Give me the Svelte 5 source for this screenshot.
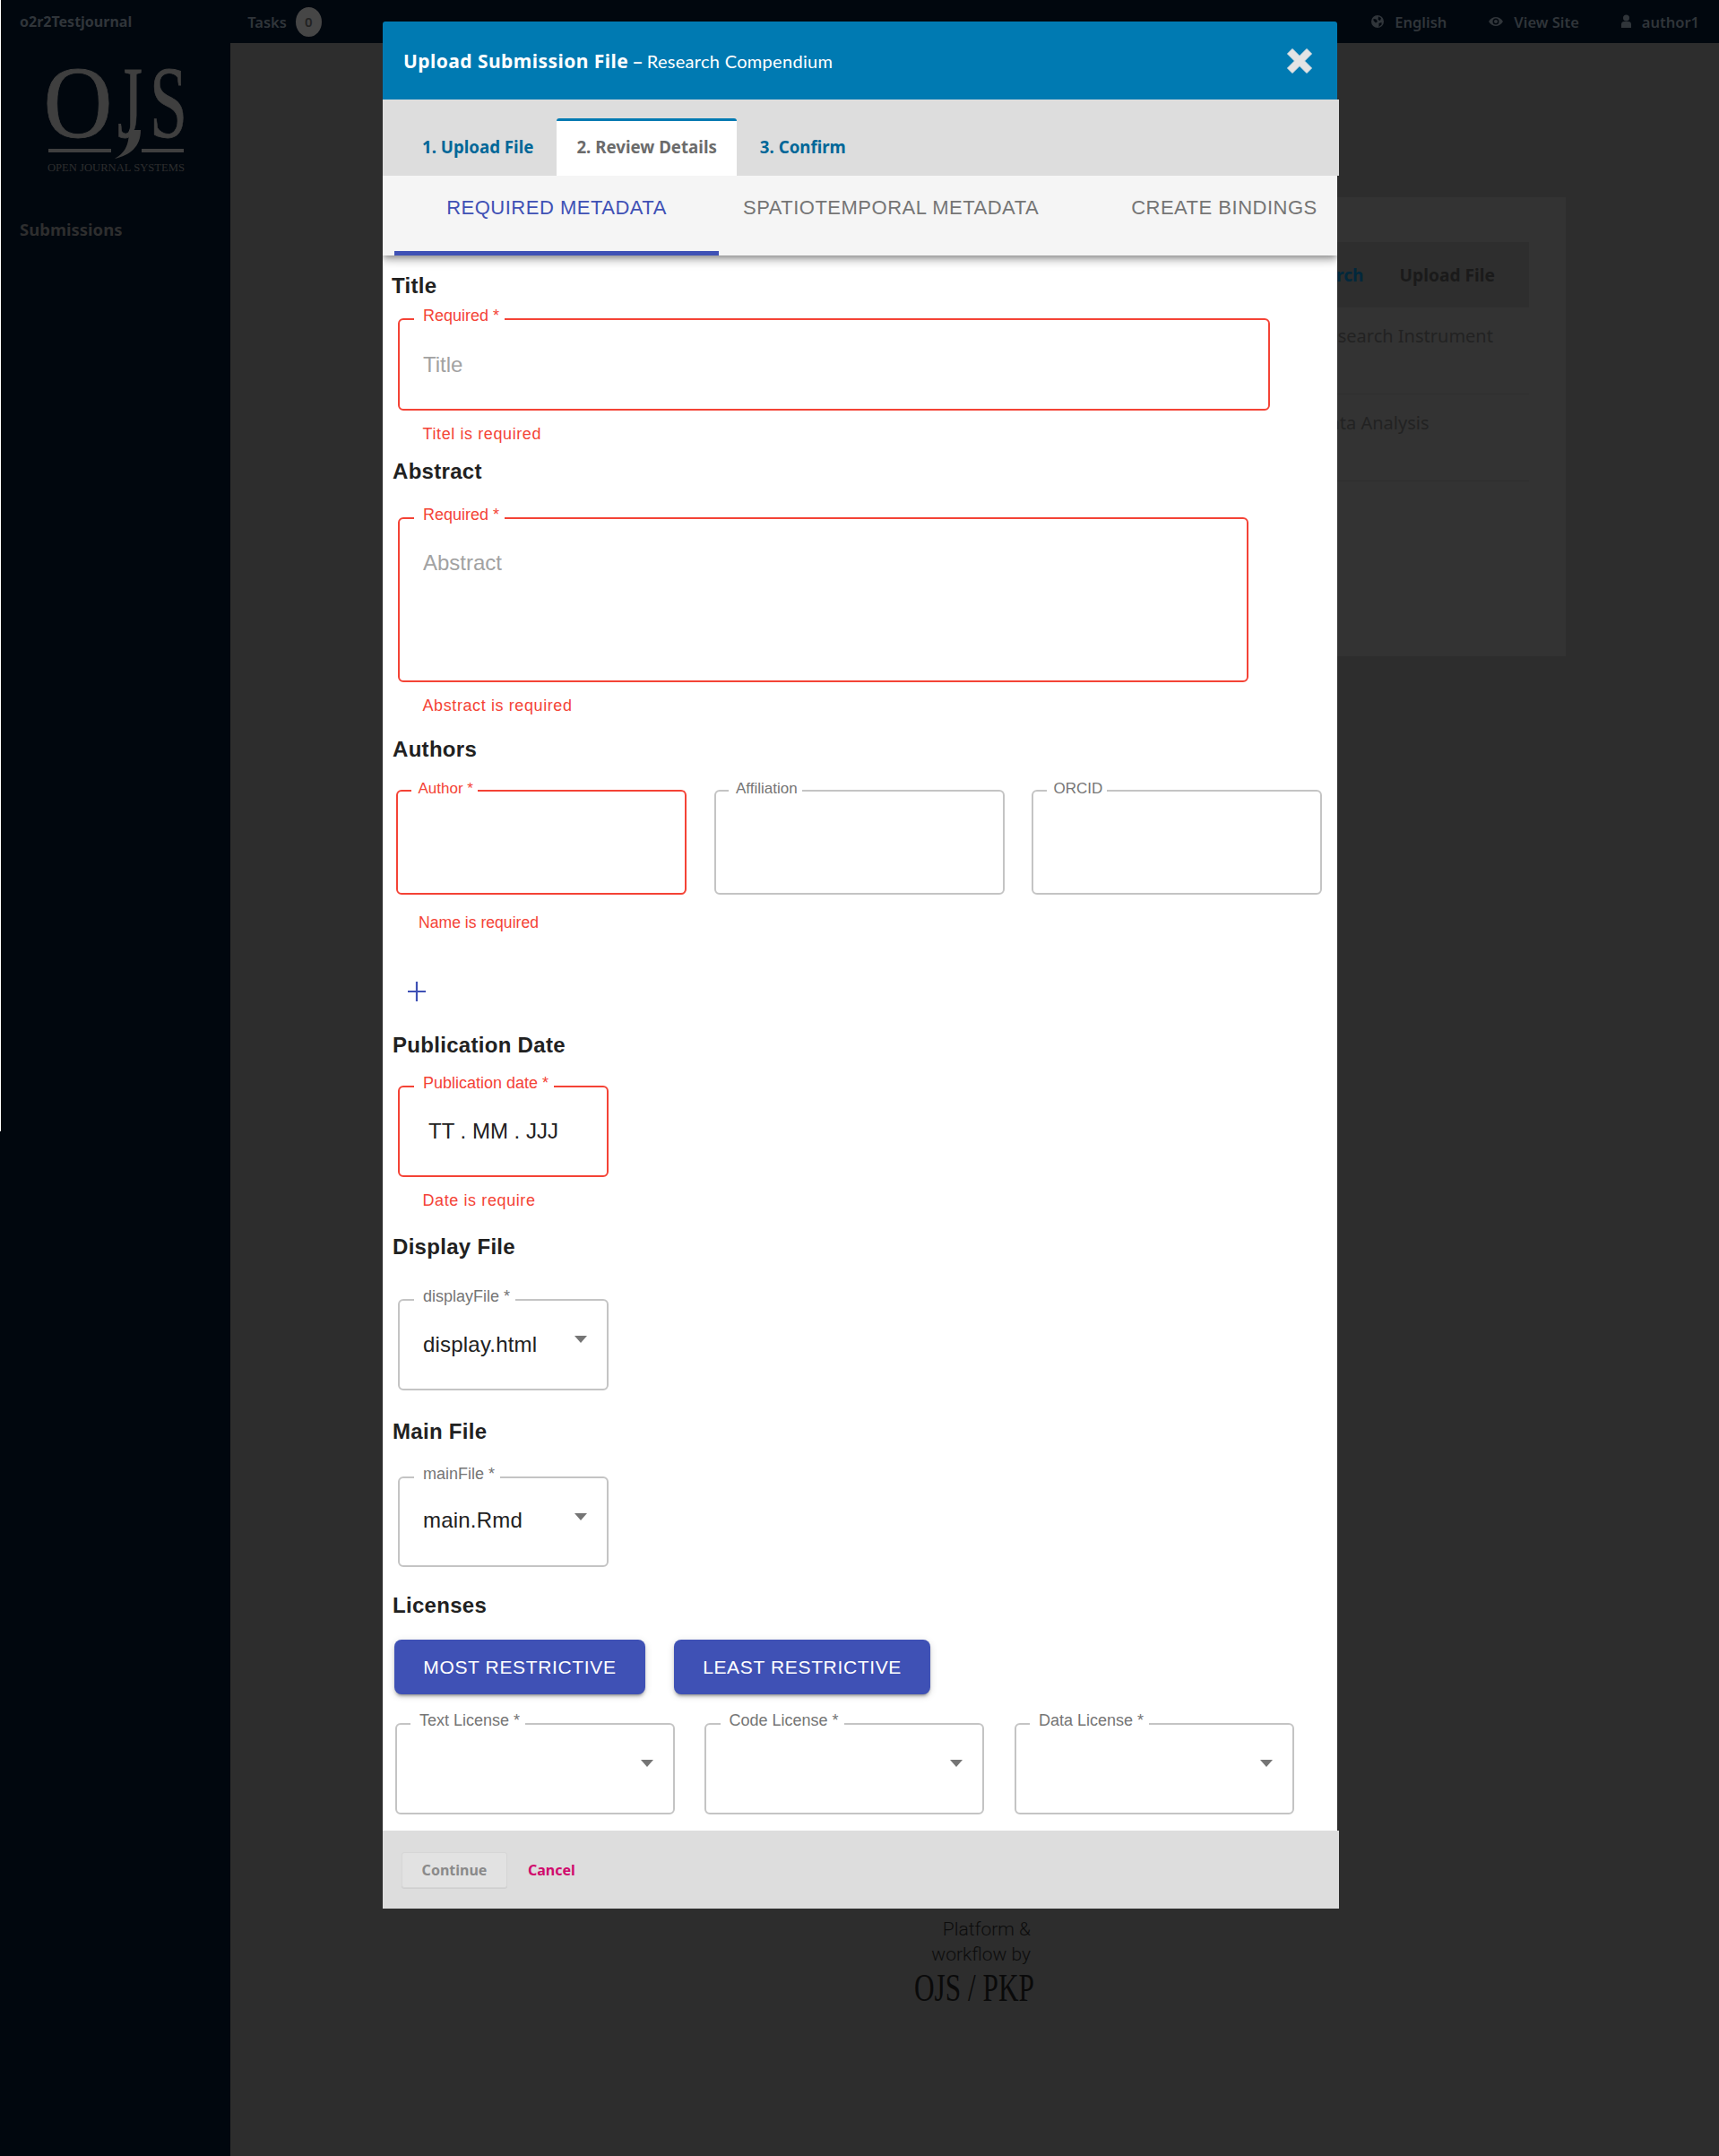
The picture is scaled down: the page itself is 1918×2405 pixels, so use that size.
<script>
  const authors = [
    { label: 'Author *', error: true },
    { label: 'Affiliation', error: false },
    { label: 'ORCID', error: false },
  ]
  const licenses = ['Text License *', 'Code License *', 'Data License *']
</script>

<div class="page">
  <header class="topbar">
    <div class="top-left">
      <span class="journal">o2r2Testjournal</span>
      <span class="tasks">Tasks</span>
      <span class="badge">0</span>
    </div>
    <nav class="top-right">
      <span class="top-link">
        <svg width="14" height="16" viewBox="0 0 14 16"><path fill="#30353a" fill-rule="evenodd" d="M7 1a7 7 0 1 0 0 14a7 7 0 0 0 0-14zM2.500 5l3 .5 1.500 2.500-2 1.500-2.500-2.500zm5.500-2.500l3 1.500-1 3-2.500-1zm.5 7.500l3-1 0 2.500-3 2.500z"/></svg>
        English
      </span>
      <span class="top-link">
        <svg width="16" height="12" viewBox="0 0 16 12"><path fill="#30353a" fill-rule="evenodd" d="M0 6c2-3.500 5-5 8-5s6 1.500 8 5c-2 3.500-5 5-8 5s-6-1.500-8-5zm8-3.500a3.500 3.500 0 1 0 0 7a3.500 3.500 0 0 0 0-7z"/><circle cx="8" cy="6" r="2" fill="#30353a"/></svg>
        View Site
      </span>
      <span class="top-link">
        <svg width="11" height="16" viewBox="0 0 11 16"><circle cx="5.500" cy="4" r="3.500" fill="#30353a"/><path fill="#30353a" d="M0 15v-4c0-2 1.500-3 3-3h5c1.500 0 3 1 3 3v4z"/></svg>
        author1
      </span>
    </nav>
  </header>

  <div class="below">
    <aside class="sidebar">
      <svg class="ojs-logo" width="220" height="140" viewBox="0 0 220 140">
        <text y="86" class="logo-big"><tspan x="11.500" textLength="77" lengthAdjust="spacingAndGlyphs">O</tspan><tspan x="94" textLength="28" lengthAdjust="spacingAndGlyphs">J</tspan><tspan x="130" textLength="42" lengthAdjust="spacingAndGlyphs">S</tspan></text>
        <path d="M107 78C107 97 101 104 91 110C108 106 120 97 120 78Z" fill="#3f3f3f" />
        <rect x="17" y="99" width="70" height="4" fill="#3f3f3f" />
        <rect x="121" y="99" width="47" height="4" fill="#3f3f3f" />
        <text x="16" y="124" class="logo-small" textLength="153" lengthAdjust="spacingAndGlyphs">OPEN JOURNAL SYSTEMS</text>
      </svg>
      <span class="side-link">Submissions</span>
    </aside>

    <main class="main">
      <section class="panel">
        <div class="table">
          <div class="table-head">
            <span class="tab-active">Research</span>
            <span class="tab-other">Upload File</span>
          </div>
          <div class="table-row"><span>Research Instrument</span></div>
          <div class="table-row"><span>Data Analysis</span></div>
        </div>
      </section>
      <footer class="brand">
        <span>Platform &amp;</span>
        <span>workflow by</span>
        <svg width="200" height="50" viewBox="0 0 200 50">
          <text x="0" y="38" class="brand-logo" textLength="134" lengthAdjust="spacingAndGlyphs">OJS / PKP</text>
        </svg>
      </footer>
    </main>
  </div>

  <div class="edge"></div>

  <div class="modal">
    <div class="modal-head">
      <h1><strong>Upload Submission File</strong><span class="dash">–</span><span class="sub">Research Compendium</span></h1>
      <svg class="close" width="32" height="32" viewBox="0 0 32 32"><path fill="#e4e4e4" d="M2.500 8 8 2.500 16 10.500 24 2.500 29.500 8 21.500 16 29.500 24 24 29.500 16 21.500 8 29.500 2.500 24 10.500 16z" stroke="#e4e4e4" stroke-width="1" stroke-linejoin="round"/></svg>
    </div>

    <div class="steps">
      <span class="step">1. Upload File</span>
      <span class="step current">2. Review Details</span>
      <span class="step">3. Confirm</span>
    </div>

    <div class="subtabs">
      <span class="subtab active">REQUIRED METADATA</span>
      <span class="subtab second">SPATIOTEMPORAL METADATA</span>
      <span class="subtab third">CREATE BINDINGS</span>
    </div>

    <div class="body">
      <h2 class="h-title">Title</h2>
      <div class="field error f-title">
        <span class="label">Required *</span>
        <span class="placeholder">Title</span>
      </div>
      <p class="err e-title">Titel is required</p>

      <h2 class="h-abstract">Abstract</h2>
      <div class="field error f-abstract">
        <span class="label">Required *</span>
        <span class="placeholder">Abstract</span>
      </div>
      <p class="err e-abstract">Abstract is required</p>

      <h2 class="h-authors">Authors</h2>
      <div class="author-row">
        {#each authors as a}
          <div class="field author" class:error={a.error}>
            <span class="label narrow">{a.label}</span>
          </div>
        {/each}
      </div>
      <p class="err e-name">Name is required</p>
      <svg class="plus" width="22" height="24" viewBox="0 0 22 24"><path d="M11 1v22M1 12h20" stroke="#3f51b5" stroke-width="2.200" fill="none"/></svg>

      <h2 class="h-date">Publication Date</h2>
      <div class="field error small f-date">
        <span class="label">Publication date *</span>
        <span class="value date">TT . MM . JJJ</span>
      </div>
      <p class="err e-date">Date is require</p>

      <h2 class="h-display">Display File</h2>
      <div class="field small f-display">
        <span class="label">displayFile *</span>
        <span class="value">display.html</span>
        <span class="arrow"></span>
      </div>

      <h2 class="h-main">Main File</h2>
      <div class="field small f-main">
        <span class="label">mainFile *</span>
        <span class="value">main.Rmd</span>
        <span class="arrow"></span>
      </div>

      <h2 class="h-licenses">Licenses</h2>
      <div class="license-btns">
        <button class="btn">Most restrictive</button>
        <button class="btn">Least restrictive</button>
      </div>
      <div class="license-row">
        {#each licenses as l}
          <div class="field license">
            <span class="label">{l}</span>
            <span class="arrow"></span>
          </div>
        {/each}
      </div>
    </div>

    <div class="modal-foot">
      <button class="continue">Continue</button>
      <span class="cancel">Cancel</span>
    </div>
  </div>
</div>

<style>
  :global(body) {
    margin: 0;
    background: #2d2d2d;
  }

  .page {
    position: relative;
    width: 1918px;
    height: 2405px;
    overflow: hidden;
    font-family: 'Noto Sans', sans-serif;
    background: #2d2d2d;
  }

  .edge {
    position: absolute;
    left: 0;
    top: 0;
    width: 1px;
    height: 1262px;
    background: #fff;
  }

  .topbar {
    height: 48px;
    background: #01070e;
    display: flex;
    justify-content: space-between;
    align-items: center;
    color: #30353a;
    font-size: 16.500px;
    font-weight: 600;
  }

  .top-left {
    display: flex;
    align-items: center;
    padding-left: 22px;
  }

  .journal {
    font-size: 16px;
    font-weight: 700;
  }

  .tasks {
    margin-left: 129px;
  }

  .badge {
    width: 29px;
    height: 33px;
    border-radius: 50%;
    background: #464646;
    color: #222;
    margin-left: 10px;
    display: flex;
    align-items: center;
    justify-content: center;
    font-size: 15px;
  }

  .top-right {
    display: flex;
    gap: 47px;
    padding-right: 22px;
  }

  .top-link {
    display: flex;
    align-items: center;
    gap: 12px;
  }

  .below {
    display: flex;
    height: 2357px;
  }

  .sidebar {
    width: 257px;
    background: #01070e;
    display: flex;
    flex-direction: column;
    padding-left: 22px;
    box-sizing: border-box;
  }

  .ojs-logo {
    margin: 19px 0 0 15px;
    display: block;
    overflow: visible;
  }

  .logo-big {
    font-family: 'Liberation Serif', serif;
    font-size: 114px;
    fill: #3f3f3f;
    stroke: #3f3f3f;
    stroke-width: 0.8px;
  }

  .logo-small {
    font-family: 'Liberation Serif', serif;
    font-size: 13px;
    fill: #2e2e2e;
  }

  .side-link {
    margin-top: 36px;
    font-size: 18.500px;
    font-weight: 700;
    color: #2e2e2e;
  }

  .main {
    flex: 1;
    display: flex;
    flex-direction: column;
  }

  .panel {
    margin: 172px 171px 0 519px;
    height: 512px;
    background: #333;
    padding: 50px 41px 0 0;
    box-sizing: border-box;
  }

  .table-head {
    height: 73px;
    background: #2e2e2e;
    display: flex;
    align-items: center;
    justify-content: flex-end;
    gap: 40px;
    padding-right: 38px;
    font-size: 19.200px;
    font-weight: 700;
  }

  .tab-active {
    color: #01283c;
  }

  .tab-other {
    color: #1a1a1a;
  }

  .table-row {
    height: 97px;
    border-bottom: 1px solid #2e2e2e;
    box-sizing: border-box;
    padding: 18px 0 0 693px;
    font-size: 20px;
    color: #222;
  }

  .brand {
    margin: 1406px 0 0 763px;
    width: 200px;
    display: flex;
    flex-direction: column;
    align-items: flex-end;
    font-family: Roboto, sans-serif;
    font-weight: 300;
    font-size: 21px;
    line-height: 28px;
    color: #0c0c0c;
  }

  .brand span {
    padding-right: 70px;
  }

  .brand svg {
    display: block;
  }

  .brand-logo {
    font-family: 'Liberation Serif', serif;
    font-size: 45px;
    fill: #0a0a0a;
  }

  .modal {
    position: absolute;
    left: 427px;
    top: 24px;
    width: 1065px;
  }

  .modal-head {
    height: 87px;
    background: #007ab2;
    border-radius: 3px 3px 0 0;
    display: flex;
    align-items: center;
    justify-content: space-between;
    padding: 0 26px 0 23px;
  }

  .modal-head h1 {
    margin: 0;
    font-size: 21px;
    font-weight: 400;
    color: #fff;
  }

  .modal-head strong {
    font-weight: 700;
    letter-spacing: 0.45px;
  }

  .dash {
    margin: 0 5px;
  }

  .sub {
    font-family: Lato, sans-serif;
    font-size: 20px;
    letter-spacing: 0.3px;
  }

  .close {
    display: block;
  }

  .steps {
    width: 1067px;
    height: 85px;
    background: #ddd;
    display: flex;
    align-items: flex-end;
    gap: 4.500px;
    padding-left: 23px;
    box-sizing: border-box;
  }

  .step {
    height: 64px;
    line-height: 58px;
    padding: 0 21px;
    font-size: 18.700px;
    font-weight: 700;
    color: #006798;
    box-sizing: border-box;
    border-top: 3px solid transparent;
  }

  .step.current {
    padding: 0 22.500px;
    background: #fff;
    color: #6b6b6b;
    border-top-color: #007ab2;
    border-radius: 3px 3px 0 0;
  }

  .subtabs {
    height: 89px;
    background: #f5f5f5;
    box-shadow: 0 3px 6px -2px rgba(0, 0, 0, 0.3), 0 6px 8px 0 rgba(0, 0, 0, 0.18), 0 2px 15px 0 rgba(0, 0, 0, 0.14);
    clip-path: inset(0 0 -40px 0);
    position: relative;
    display: flex;
    padding-left: 13px;
    box-sizing: border-box;
    font-family: 'Liberation Sans', Arial, sans-serif;
    font-size: 22px;
    letter-spacing: 0.5px;
  }

  .subtab {
    color: #757575;
    height: 89px;
    line-height: 72px;
    box-sizing: border-box;
  }

  .subtab.active {
    width: 362px;
    text-align: center;
    color: #3f51b5;
    border-bottom: 5px solid #3f51b5;
  }

  .subtab.second {
    margin-left: 27px;
  }

  .subtab.third {
    margin-left: 103px;
  }

  .body {
    background: #fff;
    height: 1757px;
    box-sizing: border-box;
    padding: 0 0 0 17px;
    font-family: 'Liberation Sans', Arial, sans-serif;
    overflow: hidden;
  }

  h2 {
    margin: 0 0 0 -6px;
    font-size: 24px;
    line-height: 28px;
    font-weight: 700;
    letter-spacing: 0.3px;
    color: #212121;
  }

  .h-title { margin-top: 20px; margin-left: -7px; }
  .h-abstract { margin-top: 18px; }
  .h-authors { margin-top: 25px; }
  .h-date { margin-top: 34px; }
  .h-display { margin-top: 28px; }
  .h-main { margin-top: 32px; }
  .h-licenses { margin-top: 29px; }

  .field {
    position: relative;
    box-sizing: border-box;
    border: 2px solid #c4c4c4;
    border-radius: 6px;
    background: #fff;
  }

  .field.error {
    border-color: #f44336;
  }

  .label {
    position: absolute;
    top: -16px;
    left: 16px;
    padding: 0 6px 0 10px;
    background: #fff;
    font-size: 18px;
    line-height: 22px;
    color: #757575;
    white-space: nowrap;
  }

  .label.narrow {
    top: -14px;
    left: 14.500px;
    font-size: 17px;
    padding: 0 5px 0 8px;
  }

  .error .label {
    color: #f44336;
  }

  .placeholder {
    position: absolute;
    left: 26px;
    top: 36px;
    font-size: 24px;
    line-height: 28px;
    color: #a2a2a2;
  }

  .f-abstract .placeholder {
    top: 35px;
  }

  .value {
    position: absolute;
    left: 26px;
    top: 35px;
    font-size: 24px;
    line-height: 28px;
    letter-spacing: 0.2px;
    color: #212121;
  }

  .value.date {
    left: 32px;
    letter-spacing: 0;
  }

  .f-main .value {
    top: 33px;
  }

  .arrow {
    position: absolute;
    right: 22px;
    top: 39px;
    width: 0;
    height: 0;
    border-left: 7px solid transparent;
    border-right: 7px solid transparent;
    border-top: 8px solid #757575;
  }

  .f-title {
    margin-top: 22px;
    width: 973px;
    height: 103px;
  }

  .f-abstract {
    margin-top: 37px;
    width: 949px;
    height: 184px;
  }

  .err {
    margin: 16px 0 0 27.500px;
    font-size: 18px;
    line-height: 20px;
    letter-spacing: 0.6px;
    color: #f44336;
  }

  .e-name {
    margin: 21px 0 0 23px;
    font-size: 17.600px;
    letter-spacing: 0;
  }

  .author-row {
    margin-top: 31px;
    margin-left: -2px;
    display: flex;
    gap: 30.500px;
  }

  .author {
    width: 324px;
    height: 117px;
  }

  .plus {
    display: block;
    margin: 55px 0 0 10px;
  }

  .small {
    width: 235px;
    height: 102px;
  }

  .f-date { margin-top: 31px; }
  .f-display { margin-top: 44px; }
  .f-main { margin-top: 36px; height: 101px; }

  .license-btns {
    margin: 24px 0 0 -4px;
    display: flex;
    gap: 32px;
  }

  .btn {
    height: 61px;
    padding: 0 32.250px;
    border: none;
    border-radius: 8px;
    background: #3f51b5;
    color: #fff;
    font-family: inherit;
    font-size: 21px;
    letter-spacing: 0.65px;
    text-transform: uppercase;
    box-shadow: 0 4px 2px -3px rgba(0, 0, 0, 0.25), 0 3px 3px 0 rgba(0, 0, 0, 0.16), 0 2px 8px 0 rgba(0, 0, 0, 0.14);
  }

  .license-row {
    margin: 32px 0 0 -3.500px;
    display: flex;
    gap: 33.500px;
  }

  .license {
    width: 312px;
    height: 102px;
  }

  .license .label {
    left: 15.500px;
  }

  .modal-foot {
    width: 1067px;
    height: 87px;
    background: #ddd;
    display: flex;
    align-items: center;
    padding-left: 21px;
    box-sizing: border-box;
  }

  .continue {
    width: 118px;
    height: 40px;
    border: 1px solid #d6d6d6;
    border-radius: 3px;
    background: #e2e2e2;
    color: #8a8a8a;
    font-family: 'Noto Sans', sans-serif;
    font-size: 16px;
    font-weight: 700;
    padding: 0;
    box-shadow: 0 1px 0 #cfcfcf;
  }

  .cancel {
    margin-left: 23px;
    color: #d00a6c;
    font-size: 16px;
    font-weight: 700;
  }
</style>
